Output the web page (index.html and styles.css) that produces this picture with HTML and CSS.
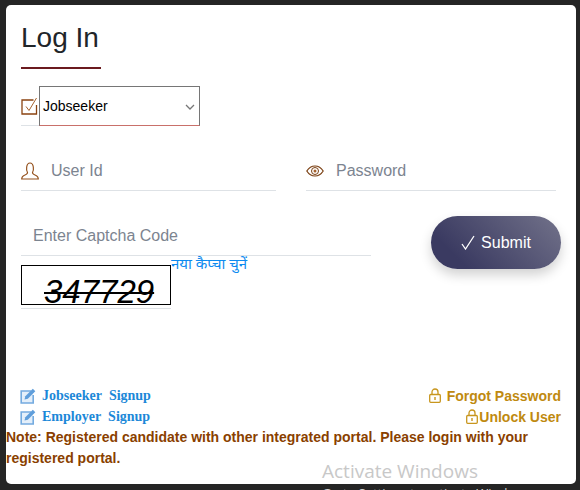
FILE: index.html
```html
<!DOCTYPE html>
<html lang="en">
<head>
<meta charset="utf-8">
<title>Log In</title>
<link rel="stylesheet" href="styles.css">
</head>
<body>
<main class="modal">
  <h1 class="title">Log In</h1>
  <div class="rule"></div>
  <div class="type-row">
    <svg class="icon type-icon" viewBox="0 0 18 18"><path d="M15.500 8v9H1V3h11.500" fill="none" stroke="#8a4310" stroke-width="1.300"/><path d="M5 9.500l3 4L15.500 1" fill="none" stroke="#a5622e" stroke-width="1"/></svg>
    <div class="select">Jobseeker<svg class="chev" viewBox="0 0 10 6"><path d="M1 1l4 4 4-4" fill="none" stroke="#777" stroke-width="1.300"/></svg></div>
  </div>
  <div class="cred-row">
    <div class="field">
      <svg class="icon user-icon" viewBox="0 0 18 18"><path d="M6.500 10.500C5 8.500 5 1 9 1s4 7.500 2.500 9.500c0 1.500 1 2 3 2.700 2 .7 2.800 1.800 2.800 3.800H.7c0-2 .8-3.100 2.800-3.800 2-.7 3-1.200 3-2.700z" fill="none" stroke="#94511c" stroke-width="1.200"/></svg>
      <span class="ph">User Id</span>
    </div>
    <div class="field field-pass">
      <svg class="icon eye-icon" viewBox="0 0 18 12"><path d="M.8 6C3 2.500 6 1 9 1s6 1.500 8.200 5C15 9.500 12 11 9 11S3 9.500.8 6z" fill="none" stroke="#7a3f12" stroke-width="1.200"/><circle cx="9" cy="6" r="3.500" fill="none" stroke="#7a3f12" stroke-width="1"/><circle cx="9" cy="6" r="1.500" fill="#a5622e"/></svg>
      <span class="ph">Password</span>
    </div>
  </div>
  <div class="captcha-row">
    <div class="captcha-col">
      <div class="captcha-input"><span class="ph">Enter Captcha Code</span></div>
      <div class="captcha-line">
        <div class="captcha-wrap"><div class="captcha"><span class="code">347729</span></div></div>
        <a class="refresh">नया कैप्चा चुनें</a>
      </div>
    </div>
    <button class="submit"><svg class="tick" viewBox="0 0 14 15"><path d="M1 9l3.500 5L13 1" fill="none" stroke="#fff" stroke-width="1.300"/></svg>Submit</button>
  </div>
  <div class="links">
    <div class="link-row">
      <a class="signup"><svg class="icon edit-icon" viewBox="0 0 16 16"><path d="M11 3H1.200v12h12V7" fill="#e4effa" stroke="#74abe0" stroke-width="1.600"/><path d="M4.500 11.500l.8-3.300L12.800.8l2.500 2.500-7.500 7.400z" fill="#5f9edb"/></svg>Jobseeker&nbsp; Signup</a>
      <a class="account account-forgot"><svg class="icon lock-icon" viewBox="0 0 12 15"><path d="M3 7V4a3 3 0 0 1 6 0v3" fill="none" stroke="#c8961e" stroke-width="1.300"/><rect x=".7" y="6.500" width="10.600" height="7.800" rx="1" fill="none" stroke="#c8961e" stroke-width="1.300"/><rect x="5.300" y="9" width="1.400" height="3" fill="#c8961e"/></svg>Forgot Password</a>
    </div>
    <div class="link-row">
      <a class="signup"><svg class="icon edit-icon" viewBox="0 0 16 16"><path d="M11 3H1.200v12h12V7" fill="#e4effa" stroke="#74abe0" stroke-width="1.600"/><path d="M4.500 11.500l.8-3.300L12.800.8l2.500 2.500-7.500 7.400z" fill="#5f9edb"/></svg>Employer&nbsp; Signup</a>
      <a class="account"><svg class="icon lock-icon" viewBox="0 0 12 15"><path d="M3 7V4a3 3 0 0 1 6 0v3" fill="none" stroke="#c8961e" stroke-width="1.300"/><rect x=".7" y="6.500" width="10.600" height="7.800" rx="1" fill="none" stroke="#c8961e" stroke-width="1.300"/><rect x="5.300" y="9" width="1.400" height="3" fill="#c8961e"/></svg>Unlock User</a>
    </div>
  </div>
  <p class="note">Note: Registered candidate with other integrated portal. Please login with your registered portal.</p>
</main>
<div class="watermark">
  <div class="wm-title">Activate Windows</div>
  <div class="wm-sub">Go to Settings to activate Windows.</div>
</div>
</body>
</html>
```
FILE: styles.css
```css
* { box-sizing: border-box; }
html, body { margin: 0; height: 490px; overflow: hidden; }
body { background: #252525; font-family: "Liberation Sans", Arial, sans-serif; position: relative; }
.modal { background: #fff; margin: 5px 4px 0 6px; width: 570px; height: 479px; border-radius: 5px; padding: 0 15px; overflow: hidden; }
.title { margin: 0; padding-top: 15px; font-size: 28px; line-height: 35px; font-weight: 400; color: #212529; }
.rule { width: 80px; height: 2px; background: #6b1a1f; margin-top: 12px; }
.icon { display: block; flex: none; }
.type-row { display: flex; align-items: center; width: 179px; margin-top: 17px; height: 40px; border-bottom: 1px solid #dee2e6; }
.type-icon { width: 18px; height: 18px; }
.select { flex: none; width: 161px; height: 40px; border: 1px solid #767676; border-bottom-color: #c9706a; padding-left: 3px; font-size: 14px; line-height: 38px; color: #000; position: relative; }
.chev { position: absolute; right: 4px; top: 17px; width: 10px; height: 6px; }
.cred-row { display: flex; gap: 30px; margin-top: 25px; }
.field { width: 255px; height: 40px; display: flex; align-items: center; border-bottom: 1px solid #dee2e6; }
.field-pass { width: 250px; }
.ph { font-size: 16px; color: #7c8490; }
.user-icon { width: 18px; height: 18px; margin-right: 12px; }
.eye-icon { width: 18px; height: 12px; margin-right: 12px; }
.captcha-row { display: flex; justify-content: space-between; margin-top: 25px; align-items: flex-start; }
.captcha-col { width: 350px; }
.captcha-input { height: 40px; padding-left: 12px; display: flex; align-items: center; border-bottom: 1px solid #dee2e6; }
.captcha-line { display: flex; margin-top: 9px; align-items: flex-start; }
.captcha-wrap { width: 150px; height: 44px; border-bottom: 1px solid #dee2e6; }
.captcha { width: 150px; height: 40px; border: 1px solid #000; overflow: hidden; padding-left: 22px; }
.code { font-style: italic; font-size: 33px; color: #000; display: block; padding-top: 14px; line-height: 24px; text-decoration: line-through; text-decoration-thickness: 2px; }
.refresh { font-family: "Noto Sans", "Liberation Sans", sans-serif; font-size: 15px; line-height: 1; color: #0d8bf0; margin-top: -9px; white-space: nowrap; }
.submit { display: flex; align-items: center; justify-content: center; gap: 6px; width: 130px; height: 53px; margin: 0; padding: 0; border: 0; border-radius: 27px; color: #fff; font-family: inherit; font-size: 16px; background: linear-gradient(45deg, #3a3a61 20%, #72728a 100%); box-shadow: 0 6px 12px rgba(0,0,0,.18); }
.tick { display: block; width: 14px; height: 15px; }
.links { margin-top: 76px; }
.link-row { display: flex; justify-content: space-between; align-items: center; height: 21px; }
.signup { display: flex; align-items: center; font-family: "Liberation Serif", serif; font-weight: 700; font-size: 14px; color: #1b88d8; margin-left: -1px; }
.edit-icon { width: 16px; height: 16px; margin-right: 6px; }
.account { display: flex; align-items: center; font-weight: 700; font-size: 14px; color: #bf8a10; }
.lock-icon { width: 12px; height: 15px; margin-right: 1px; }
.account-forgot .lock-icon { margin-right: 6px; }
.note { margin: 0 -15px; font-size: 14px; font-weight: 700; line-height: 21px; color: #8a3f00; width: 540px; }
.watermark { position: absolute; left: 322px; top: 459px; white-space: nowrap; font-family: "Open Sans", sans-serif; }
.wm-title { font-size: 19px; line-height: 24px; color: #c8c8c8; }
.wm-sub { font-size: 13px; line-height: 14px; color: #d0d0d0; margin-top: 3px; }
```
